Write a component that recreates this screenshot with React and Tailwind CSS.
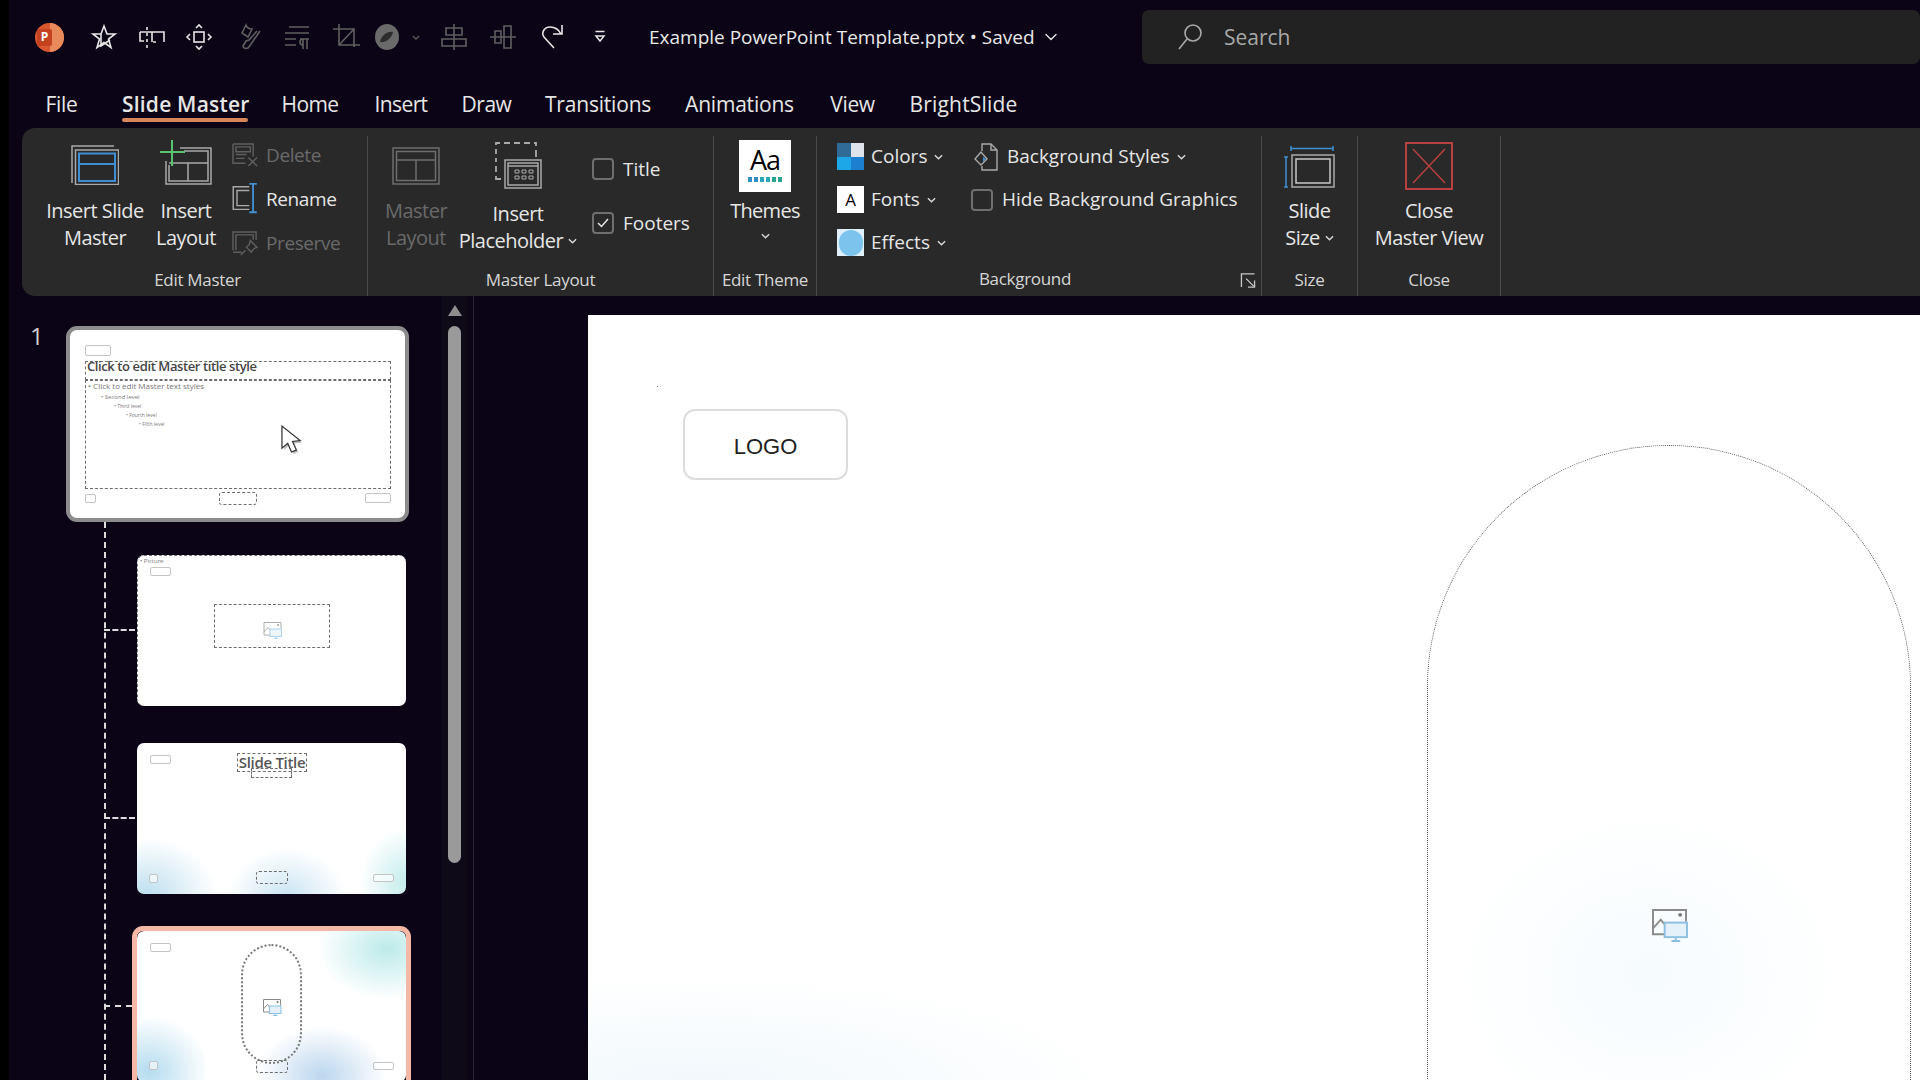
import { ChevronDown } from 'lucide-react';

const grey = '#a9a9a9';
const dim = '#5f5f5f';

const Chev = ({ className = '' }) => (
  <svg viewBox="0 0 10 6" className={`w-[9px] h-[6px] shrink-0 ${className}`} fill="none" stroke="#d8d8d8" strokeWidth="1.6">
    <path d="M1 1l4 4 4-4" />
  </svg>
);

const QIcon = ({ c = '#e6e6e6', children }) => (
  <svg viewBox="0 0 28 28" className="w-[28px] h-[28px]" fill="none" stroke={c} strokeWidth="1.6">
    {children}
  </svg>
);

function QuickBar() {
  return (
    <div className="h-[74px] flex items-center">
      <div className="ml-[26px] w-[29px] h-[29px] rounded-full bg-[#d9572f] relative overflow-hidden shrink-0">
        <div className="absolute right-0 top-0 w-[14px] h-[29px] bg-[#e98a5c]" />
        <div className="absolute left-[2px] top-[6px] w-[15px] h-[17px] rounded-[2px] bg-[#c4421f] flex items-center justify-center text-white text-[12px] font-bold leading-none">P</div>
      </div>
      <div className="ml-[26px]">
        <QIcon>
          <path d="M14 3l3 8h8l-6.500 5 2.500 8.500-7-5-7 5 2.500-8.500L3 11h8z" />
          <path d="M11 11v12l9-6" />
        </QIcon>
      </div>
      <div className="ml-[20px]">
        <QIcon>
          <path d="M9 4v3M9 10v3M9 16v3M9 22v3M2 9h24v10M14 9v10M2 9v9h4M18 19h-3" />
        </QIcon>
      </div>
      <div className="ml-[19px]">
        <QIcon>
          <rect x="9" y="9" width="10" height="10" />
          <path d="M11 5l3-3 3 3M11 23l3 3 3-3M5 11l-3 3 3 3M23 11l3 3-3 3" />
        </QIcon>
      </div>
      <div className="ml-[23px]">
        <QIcon c={dim}>
          <path d="M10 2l-4 8 6 4 4-8c-2 0-5-1-6-4zM24 8l-9 13-3 4c-3 1-5 0-5-2l3-5 3-1 8-9" />
        </QIcon>
      </div>
      <div className="ml-[19px]">
        <QIcon c={dim}>
          <path d="M6 4h20M2 10h24M2 16h11M2 22h11M17 16h9M20 16v10M24 16v10M20 16a3 3 0 000 6" />
        </QIcon>
      </div>
      <div className="ml-[21px]">
        <QIcon c={dim}>
          <path d="M1 6h21v18M7 1v21h21M22 6L7 22" />
        </QIcon>
      </div>
      <div className="ml-[13px]">
        <svg viewBox="0 0 28 28" className="w-[28px] h-[28px]">
          <ellipse cx="14" cy="14" rx="12" ry="13" fill="#6a6a6a" />
          <path d="M7 19c1-6 7-11 13-10-1 6-7 11-13 10z" fill="#1a1a1a" opacity=".75" />
        </svg>
      </div>
      <div className="ml-[1px] w-[28px] flex justify-center">
        <svg viewBox="0 0 10 6" className="w-[8px] h-[5px]" fill="none" stroke={dim} strokeWidth="1.600"><path d="M1 1l4 4 4-4" /></svg>
      </div>
      <div className="ml-[10px]">
        <QIcon c={dim}>
          <path d="M14 1v26M6 5h16v7H6zM2 16h24v7H2z" />
        </QIcon>
      </div>
      <div className="ml-[21px]">
        <QIcon c={dim}>
          <path d="M1 14h26M6 8h6v12H6zM15 3h7v22h-7z" />
        </QIcon>
      </div>
      <div className="ml-[20px]">
        <QIcon>
          <path d="M17 25L7 14c-3-4 0-10 6-10 5 0 9 3 11 7M25 2v9h-9" />
        </QIcon>
      </div>
      <div className="ml-[21px]">
        <svg viewBox="0 0 12 14" className="w-[28px] h-[14px]" fill="none" stroke="#e6e6e6" strokeWidth="1.500">
          <path d="M1.500 1.500h9M2 6h8l-4 5z" />
        </svg>
      </div>
      <div className="ml-[35px] text-[19px] text-[#e8e8e8] whitespace-nowrap">Example PowerPoint Template.pptx • Saved</div>
      <ChevronDown className="ml-[6px] w-[20px] h-[20px] text-[#e8e8e8]" strokeWidth={1.600} />
      <div className="ml-auto w-[778px] h-[54px] bg-[#222222] rounded-[7px] flex items-center text-[#a8a8a8] text-[21px]">
        <svg viewBox="0 0 26 28" className="ml-[35px] w-[26px] h-[28px]" fill="none" stroke="#a8a8a8" strokeWidth="1.600">
          <circle cx="16" cy="10" r="8" />
          <path d="M10 16L2 26" />
        </svg>
        <span className="ml-[21px] mt-[2px]">Search</span>
      </div>
    </div>
  );
}

const tabs = [
  { name: 'File', w: 'w-[33px] mr-[11px]', tr: 'tracking-[-0.3px]' },
  { name: 'Slide Master', w: 'w-[126px]', tr: 'tracking-[0.2px]', active: true },
  { name: 'Home', w: 'w-[58px] mr-[2px]', tr: 'tracking-[-0.6px]' },
  { name: 'Insert', w: 'w-[54px]', tr: 'tracking-[-0.6px]' },
  { name: 'Draw', w: 'w-[51px]', tr: 'tracking-[-0.5px]' },
  { name: 'Transitions', w: 'w-[105px]', tr: 'tracking-[-0.2px]' },
  { name: 'Animations', w: 'w-[113px]', tr: 'tracking-[-0.2px]' },
  { name: 'View', w: 'w-[47px]', tr: 'tracking-[-0.3px]' },
  { name: 'BrightSlide', w: 'w-[109px]', tr: 'tracking-[0.2px]' },
];

function Tabs() {
  return (
    <div className="h-[54px] pl-[36px] flex gap-[33px] text-[21px] text-[#e6e6e6]">
      {tabs.map((t) => (
        <div key={t.name} className={`relative pt-[14px] leading-[32px] text-center whitespace-nowrap ${t.w} ${t.tr} ${t.active ? 'font-semibold' : ''}`}>
          {t.name}
          {t.active && <div className="absolute left-0 right-0 top-[44px] h-[4px] rounded-full bg-[#d6855a]" />}
        </div>
      ))}
    </div>
  );
}

function Large({ w, area = 'h-[61px]', lines, icon, disabled, chev }) {
  return (
    <div className={`flex flex-col items-center shrink-0 ${w}`}>
      <div className={`flex justify-center items-start ${area}`}>{icon}</div>
      <div className={`text-center text-[20px] leading-[27px] tracking-[-0.5px] whitespace-nowrap ${disabled ? 'text-[#6a6a6a]' : 'text-[#e6e6e6]'}`}>
        <div>{lines[0]}</div>
        <div className="flex items-center justify-center gap-[5px]">
          {lines[1]}
          {chev && <Chev />}
        </div>
      </div>
    </div>
  );
}

function Small({ icon, label, disabled }) {
  return (
    <div className="h-[44px] flex items-center gap-[7px]">
      {icon}
      <span className={`text-[19px] tracking-[-0.4px] ${disabled ? 'text-[#6a6a6a]' : 'text-[#e6e6e6]'}`}>{label}</span>
    </div>
  );
}

function Check({ label, checked, className = '' }) {
  return (
    <div className={`flex items-center gap-[9px] ${className}`}>
      <div className="w-[22px] h-[22px] rounded-[4px] border-2 border-[#6f6f6f] flex items-center justify-center">
        {checked && (
          <svg viewBox="0 0 12 10" className="w-[12px] h-[10px]" fill="none" stroke="#e6e6e6" strokeWidth="1.500"><path d="M1 5l3.500 3.500L11 1" /></svg>
        )}
      </div>
      <span className="text-[19px] text-[#e6e6e6] whitespace-nowrap">{label}</span>
    </div>
  );
}

function Group({ w, label, labelClass = '', children, className = '', extra }) {
  return (
    <div className={`relative shrink-0 flex flex-col border-r border-[#4a4a4a] ${w}`}>
      <div className={`h-[134px] flex ${className}`}>{children}</div>
      <div className={`h-[17px] leading-[20px] text-center text-[17px] text-[#d6d6d6] tracking-[-0.3px] ${labelClass}`}>{label}</div>
      {extra}
    </div>
  );
}

const MasterIcon = () => (
  <svg viewBox="0 0 48 40" className="mt-[9px] w-[48px] h-[40px]" fill="none">
    <path d="M1 38V1h42" stroke={grey} strokeWidth="1.500" />
    <rect x="4.500" y="5" width="43" height="34.500" stroke={grey} strokeWidth="1.500" />
    <rect x="8" y="8.500" width="36" height="27.500" stroke="#3f8fd2" strokeWidth="2" />
    <path d="M8 19h36" stroke="#3f8fd2" strokeWidth="2" />
  </svg>
);

const InsertLayoutIcon = () => (
  <svg viewBox="0 0 52 46" className="mt-[3px] w-[52px] h-[46px]" fill="none" stroke={grey} strokeWidth="1.500">
    <path d="M6 22v23h45V9H20" />
    <path d="M9 26v16h39V12H24M9 24h39M28 24v18" />
    <path d="M0 13h25M12 1v26" stroke="#58c46f" strokeWidth="2" />
  </svg>
);

const MasterLayoutIcon = () => (
  <svg viewBox="0 0 48 38" className="mt-[11px] w-[48px] h-[38px]" fill="none" stroke="#6e6e6e" strokeWidth="1.500">
    <rect x="1" y="1" width="46" height="36" />
    <rect x="4.500" y="4.500" width="39" height="29" />
    <path d="M4.500 13h39M24 13v20" />
  </svg>
);

const PlaceholderIcon = () => (
  <svg viewBox="0 0 47 47" className="mt-[6px] w-[47px] h-[47px]" fill="none" stroke={grey} strokeWidth="1.500">
    <path d="M1 20v-4M1 12V7M1 3V1h4M9 1h6M19 1h6M29 1h6M39 1h2v3M41 8v7M1 24v6M1 34v3h5" strokeWidth="1.800" />
    <rect x="10" y="18" width="36" height="28" />
    <rect x="13" y="21" width="30" height="22" />
    <path d="M13 24h30" />
    <path d="M20 28h4v3h-4zM27 28h4v3h-4zM34 28h4v3h-4zM20 34h4v3h-4zM27 34h4v3h-4zM34 34h4v3h-4z" strokeWidth="1" />
  </svg>
);

const ThemeIcon = () => (
  <div className="mt-[4px] w-[52px] h-[52px] bg-white flex flex-col items-center pt-[6px]">
    <div className="text-[27px] leading-[28px] text-black tracking-[-1px]">Aa</div>
    <div className="mt-[3px] flex gap-[2px]">
      {['bg-[#2f8fc2]', 'bg-[#2f8fc2]', 'bg-[#2ba6b8]', 'bg-[#2ba6b8]', 'bg-[#2aa58f]', 'bg-[#2aa58f]'].map((c, i) => (
        <div key={i} className={`w-[4px] h-[5px] ${c}`} />
      ))}
    </div>
  </div>
);

const SizeIcon = () => (
  <svg viewBox="0 0 51 42" className="mt-[10px] w-[51px] h-[42px]" fill="none">
    <path d="M7 0v5M7 2.500h42M49 0v5M2 11v30M0 11h4M0 41h4" stroke="#3f8fd2" strokeWidth="1.500" />
    <rect x="8" y="9" width="42" height="32" stroke={grey} strokeWidth="1.500" />
    <rect x="12" y="13" width="34" height="24" stroke="#c8c8c8" strokeWidth="1.500" />
  </svg>
);

const CloseIcon = () => (
  <svg viewBox="0 0 48 48" className="mt-[6px] w-[48px] h-[48px]" fill="none" stroke="#b8403f" strokeWidth="2">
    <rect x="1" y="1" width="46" height="46" />
    <path d="M8 7l32 34M40 7L8 41" strokeWidth="1.500" />
  </svg>
);

const DeleteIcon = () => (
  <svg viewBox="0 0 28 26" className="w-[27px] h-[25px]" fill="none" stroke={dim} strokeWidth="1.500">
    <path d="M1 1h21v13M1 1v20h13M4 4h15v5H4zM4 12h11M4 16h9" />
    <path d="M17 15l9 9M26 15l-9 9" />
  </svg>
);
const RenameIcon = () => (
  <svg viewBox="0 0 28 36" className="w-[27px] h-[34px]" fill="none">
    <path d="M18 5H1v24h17M18 9H5v16h13" stroke={grey} strokeWidth="1.500" />
    <path d="M18 2h8M22 2v30M18 32h8" stroke="#3f8fd2" strokeWidth="2" />
  </svg>
);
const PreserveIcon = () => (
  <svg viewBox="0 0 28 26" className="w-[27px] h-[25px]" fill="none" stroke={dim} strokeWidth="1.500">
    <path d="M1 20V1h24v8M4 20V4h18v5M1 22h9" />
    <path d="M19 10l7 7-3 1-3 4-5-5 3-3zM14 20l-5 5" />
  </svg>
);

function Ribbon() {
  return (
    <div className="ml-[13px] h-[168px] pt-[8px] rounded-l-[13px] bg-[#292929] flex shrink-0">
      <Group w="w-[346px]" label="Edit Master" labelClass="pl-[6px]" className="pl-[23px]">
        <Large w="w-[100px]" lines={['Insert Slide', 'Master']} icon={<MasterIcon />} />
        <Large w="w-[70px] ml-[6px]" lines={['Insert', 'Layout']} icon={<InsertLayoutIcon />} />
        <div className="ml-[11px] -mt-[3px] flex flex-col">
          <Small icon={<DeleteIcon />} label="Delete" disabled />
          <Small icon={<RenameIcon />} label="Rename" />
          <Small icon={<PreserveIcon />} label="Preserve" disabled />
        </div>
      </Group>
      <Group w="w-[346px]" label="Master Layout" className="pl-[14px]">
        <Large w="w-[68px]" lines={['Master', 'Layout']} disabled icon={<MasterLayoutIcon />} />
        <Large w="w-[118px] ml-[9px]" area="h-[64px]" lines={['Insert', 'Placeholder']} chev icon={<PlaceholderIcon />} />
        <div className="ml-[15px] flex flex-col pt-[19px] gap-[25px]">
          <Check label="Title" />
          <Check label="Footers" checked />
        </div>
      </Group>
      <Group w="w-[103px]" label="Edit Theme">
        <div className="w-full flex flex-col items-center">
          <div className="h-[61px]"><ThemeIcon /></div>
          <div className="text-[20px] leading-[27px] text-[#e6e6e6] tracking-[-0.7px]">Themes</div>
          <Chev className="mt-[9px]" />
        </div>
      </Group>
      <Group
        w="w-[445px]"
        label="Background"
        labelClass="pr-[28px]"
        className="pl-[20px] -mt-[1px]"
        extra={
          <svg viewBox="0 0 16 16" className="absolute left-[423px] top-[137px] w-[16px] h-[15px]" fill="none" stroke="#c8c8c8" strokeWidth="1.400">
            <path d="M1 15V1h14M6 6l8 8M15 8v7H8" />
          </svg>
        }
      >
        <div className="flex flex-col">
          <div className="h-[43px] flex items-center">
            <div className="w-[27px] h-[27px] grid grid-cols-2">
              <div className="bg-[#2f6b96]" /><div className="bg-[#dfe4ea]" />
              <div className="bg-[#1ea7e8]" /><div className="bg-[#1d7fd0]" />
            </div>
            <span className="ml-[7px] text-[19px] text-[#e6e6e6]">Colors</span>
            <Chev className="ml-[7px]" />
          </div>
          <div className="h-[43px] flex items-center">
            <div className="w-[27px] h-[27px] bg-white flex items-center justify-center text-[17px] text-black">A</div>
            <span className="ml-[7px] text-[19px] text-[#e6e6e6]">Fonts</span>
            <Chev className="ml-[7px]" />
          </div>
          <div className="h-[43px] flex items-center">
            <div className="w-[27px] h-[27px] bg-[#dff0fa] flex items-center justify-center">
              <div className="w-[24px] h-[26px] rounded-full bg-[#7cc3ee]" />
            </div>
            <span className="ml-[7px] text-[19px] text-[#e6e6e6]">Effects</span>
            <Chev className="ml-[7px]" />
          </div>
        </div>
        <div className="ml-[25px] flex flex-col">
          <div className="h-[43px] flex items-center pl-[3px]">
            <svg viewBox="0 0 24 28" className="w-[24px] h-[28px]" fill="none" stroke={grey} strokeWidth="1.400">
              <path d="M8 8V1h9l6 6v20H8v-4M17 1v6h6" />
              <path d="M7 9L1 16l6 6 6-6z" />
              <path d="M9 14l3 2-3 3z" fill="#3f8fd2" stroke="none" />
            </svg>
            <span className="ml-[9px] text-[19px] text-[#e6e6e6] whitespace-nowrap">Background Styles</span>
            <Chev className="ml-[8px]" />
          </div>
          <Check label="Hide Background Graphics" className="h-[43px]" />
        </div>
      </Group>
      <Group w="w-[96px]" label="Size">
        <Large w="w-full" lines={['Slide', 'Size']} chev icon={<SizeIcon />} />
      </Group>
      <Group w="w-[143px]" label="Close">
        <Large w="w-full" lines={['Close', 'Master View']} icon={<CloseIcon />} />
      </Group>
    </div>
  );
}

const PicIcon = ({ className }) => (
  <svg viewBox="0 0 38 34" className={className} fill="none">
    <path d="M30 26H2V1h34v12" stroke="#8a8a8a" strokeWidth="2" />
    <path d="M2 20l8-9 9 11" stroke="#8a8a8a" strokeWidth="2" />
    <circle cx="30" cy="6" r="2" fill="#777" />
    <rect x="14" y="14" width="23" height="15" fill="#e4f1fa" stroke="#8cbfe0" strokeWidth="2" />
    <path d="M25.500 29v3M21 33h9" stroke="#8cbfe0" strokeWidth="2" />
  </svg>
);

const Box = ({ className }) => <div className={`absolute border border-[#c4c4c4] rounded-[2px] bg-white/60 ${className}`} />;
const Dash = ({ className, children }) => (
  <div className={`absolute border border-dashed border-[#6d6d6d] ${className}`}>{children}</div>
);

function MasterThumb() {
  return (
    <div className="relative ml-[24px] w-[343px] h-[196px] rounded-[11px] border-[4px] border-[#8c8c8c] bg-white overflow-hidden">
      <Box className="left-[15px] top-[15px] w-[26px] h-[11px]" />
      <Dash className="left-[15px] top-[31px] w-[306px] h-[19px] text-[13px] leading-[9px] pl-[1px] font-semibold text-[#444444] tracking-[-0.4px] whitespace-nowrap">
        Click to edit Master title style
      </Dash>
      <Dash className="left-[15px] top-[50px] w-[306px] h-[109px] pl-[2px] text-[#777777] whitespace-nowrap">
        <div className="-mt-[1px] text-[8px] leading-[11px]">• Click to edit Master text styles</div>
        <div className="mt-[2px] ml-[13px] text-[6px] leading-[9px]">• Second level</div>
        <div className="ml-[26px] text-[5px] leading-[9px]">• Third level</div>
        <div className="ml-[38px] text-[5px] leading-[9px]">• Fourth level</div>
        <div className="ml-[51px] text-[5px] leading-[8px]">• Fifth level</div>
      </Dash>
      <Box className="left-[15px] top-[164px] w-[11px] h-[9px]" />
      <Dash className="left-[149px] top-[162px] w-[38px] h-[13px] rounded-[3px]" />
      <Box className="left-[295px] top-[163px] w-[26px] h-[10px]" />
      <svg viewBox="0 0 24 32" className="absolute left-[211px] top-[95px] w-[23px] h-[31px]">
        <path d="M3 4l0 22 6-5 4 9 5-2-4-9 8-1z" fill="#000" opacity=".25" />
        <path d="M1 1v23l6-5 4 9 5-2-4-9 8-1z" fill="#fff" stroke="#333" strokeWidth="1.300" />
      </svg>
    </div>
  );
}

function Thumb({ className, children }) {
  return (
    <div className={`relative shrink-0 w-[269px] h-[151px] rounded-[7px] bg-white overflow-hidden ${className}`}>
      {children}
    </div>
  );
}

function Sidebar() {
  return (
    <aside className="relative w-[465px] h-[784px] border-r border-[#2a2535] flex shrink-0 overflow-hidden">
      <div className="w-[433px] pt-[30px] flex flex-col">
        <div className="flex items-start shrink-0">
          <div className="w-[33px] pl-[21px] text-[24px] leading-[28px] text-[#d0d0d0] -mt-[4px]">1</div>
          <MasterThumb />
        </div>
        <Thumb className="mt-[33px] ml-[128px]">
          <div className="absolute inset-0 border-t border-l border-dashed border-[#777777] rounded-[7px]" />
          <div className="absolute left-[3px] top-[1px] text-[6px] leading-[10px] text-[#777777]">• Picture</div>
          <Box className="left-[13px] top-[12px] w-[21px] h-[9px]" />
          <Dash className="left-[77px] top-[49px] w-[116px] h-[44px] flex items-center justify-center pt-[8px]">
            <PicIcon className="w-[23px] h-[17px] opacity-70" />
          </Dash>
        </Thumb>
        <Thumb className="mt-[37px] ml-[128px] bg-[radial-gradient(ellipse_70px_55px_at_10px_150px,#c0e0f0,transparent),radial-gradient(ellipse_60px_50px_at_150px_155px,#c9e4f3,transparent),radial-gradient(ellipse_45px_55px_at_268px_140px,#c5ecec,transparent)]">
          <Box className="left-[13px] top-[12px] w-[21px] h-[9px]" />
          <Dash className="left-[100px] top-[10px] w-[70px] h-[19px] text-[15px] leading-[17px] text-center font-semibold text-[#555555] tracking-[-0.3px] whitespace-nowrap">Slide Title</Dash>
          <Dash className="left-[114px] top-[25px] w-[41px] h-[10px]" />
          <Box className="left-[12px] top-[131px] w-[9px] h-[9px]" />
          <Dash className="left-[119px] top-[128px] w-[32px] h-[13px] rounded-[3px]" />
          <Box className="left-[236px] top-[131px] w-[21px] h-[8px]" />
        </Thumb>
        <div className="mt-[32px] ml-[123px] w-[279px] shrink-0 rounded-[11px] border-[5px] border-[#f4b8a6] h-[170px] overflow-hidden">
          <Thumb className="bg-[radial-gradient(ellipse_70px_50px_at_250px_18px,#bdeaea,transparent),radial-gradient(ellipse_60px_55px_at_12px_140px,#b5dcef,transparent),radial-gradient(ellipse_65px_50px_at_185px_145px,#bcd6ee,transparent)]">
            <Box className="left-[13px] top-[12px] w-[21px] h-[9px]" />
            <div className="absolute left-[104px] top-[13px] w-[61px] h-[120px] rounded-full border-2 border-dotted border-[#777777] flex items-center justify-center pt-[6px]">
              <PicIcon className="w-[24px] h-[17px]" />
            </div>
            <Dash className="left-[119px] top-[129px] w-[32px] h-[13px] rounded-[3px]" />
            <Box className="left-[12px] top-[130px] w-[9px] h-[9px]" />
            <Box className="left-[236px] top-[131px] w-[21px] h-[8px]" />
          </Thumb>
        </div>
      </div>
      <div className="w-[25px] bg-[#0e0a17] flex flex-col items-center">
        <div className="mt-[9px] w-0 h-0 border-l-[7px] border-r-[7px] border-b-[11px] border-l-transparent border-r-transparent border-b-[#8e8e8e]" />
        <div className="mt-[10px] w-[13px] h-[537px] rounded-full bg-[#9a9a9a]" />
      </div>
      <div className="absolute left-[95px] top-[226px] h-[558px] border-l-2 border-dashed border-[#dcdcdc]" />
      <div className="absolute left-[95px] top-[333px] w-[31px] border-t-2 border-dashed border-[#dcdcdc]" />
      <div className="absolute left-[95px] top-[521px] w-[31px] border-t-2 border-dashed border-[#dcdcdc]" />
      <div className="absolute left-[95px] top-[709px] w-[28px] border-t-2 border-dashed border-[#dcdcdc]" />
    </aside>
  );
}

function Slide() {
  return (
    <div className="relative w-full h-[765px] overflow-hidden bg-white bg-[radial-gradient(ellipse_420px_110px_at_110px_770px,#f1f8fc,transparent),radial-gradient(ellipse_200px_170px_at_1060px_660px,#f6fbfe,transparent)]">
      <div className="absolute left-[69px] top-[71px] w-[1px] h-[1px] bg-[#777777]" />
      <div className="absolute left-[95px] top-[94px] w-[165px] h-[71px] rounded-[12px] border-2 border-[#dcdcdc] flex items-center justify-center pt-[3px] text-[22px] text-[#222222] font-['Liberation_Sans',sans-serif]">LOGO</div>
      <div className="absolute left-[839px] top-[130px] w-[484px] h-[1100px] rounded-[242px] border border-dotted border-[#555555]" />
      <PicIcon className="absolute left-[1063px] top-[594px] w-[37px] h-[33px]" />
    </div>
  );
}

export default function App() {
  return (
    <div className="w-[1920px] h-[1080px] overflow-hidden bg-[#0a0416] border-l-[9px] border-black font-['Open_Sans',sans-serif] flex flex-col">
      <QuickBar />
      <Tabs />
      <Ribbon />
      <div className="flex flex-1 min-h-0">
        <Sidebar />
        <main className="flex-1 min-w-0 pl-[114px] pt-[19px]">
          <Slide />
        </main>
      </div>
    </div>
  );
}
